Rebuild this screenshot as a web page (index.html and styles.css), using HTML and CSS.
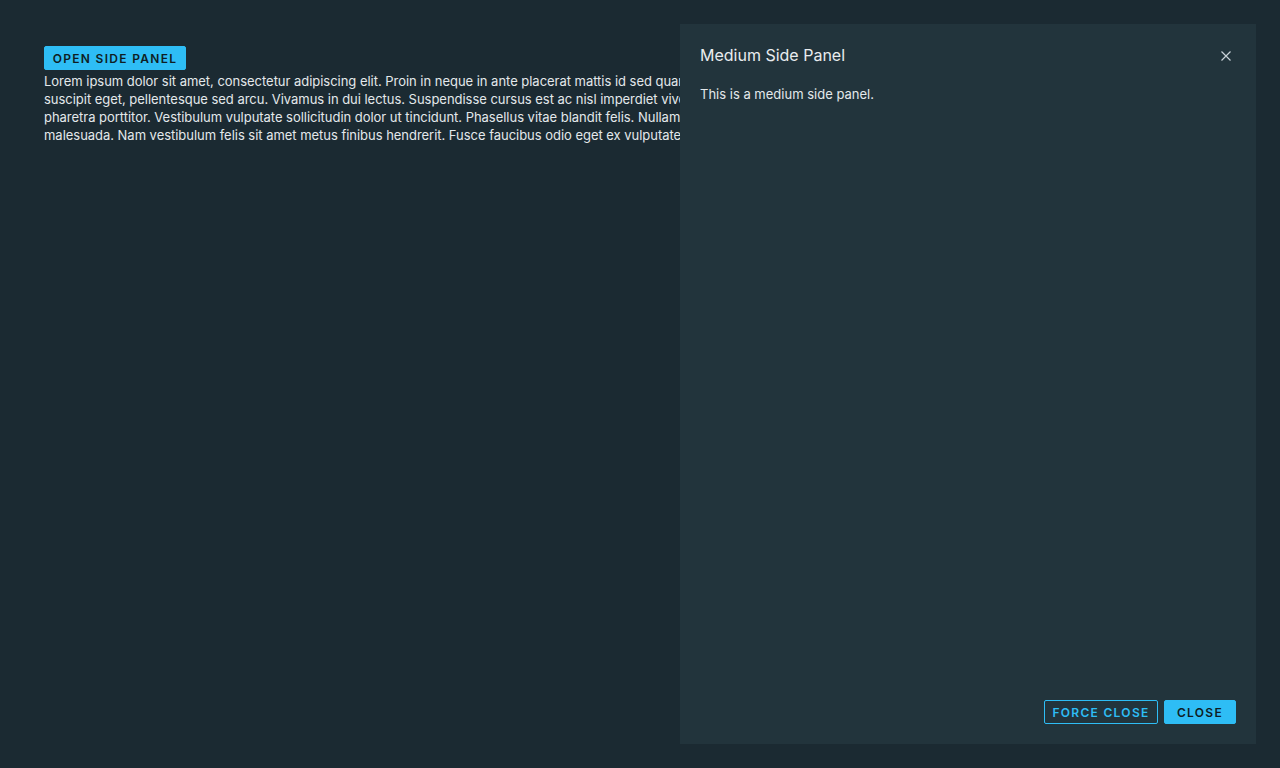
FILE: index.html
```html
<!DOCTYPE html>
<html>
<head>
<meta charset="utf-8">
<link rel="stylesheet" href="styles.css">
</head>
<body>
<main class="content">
  <button class="btn btn-primary btn-open">OPEN SIDE PANEL</button>
  <p class="lorem">Lorem ipsum dolor sit amet, consectetur adipiscing elit. Proin in neque in ante placerat mattis id sed quam. Proin rhoncus lacus et tristique pharetra. Nunc vitae ligula at metus<br>suscipit eget, pellentesque sed arcu. Vivamus in dui lectus. Suspendisse cursus est ac nisl imperdiet viverra. Aenean sagittis nibh lacus, in eleifend urna ultrices<br>pharetra porttitor. Vestibulum vulputate sollicitudin dolor ut tincidunt. Phasellus vitae blandit felis. Nullam posuere ipsum tincidunt velit pellentesque rhoncus. Morbi<br>malesuada. Nam vestibulum felis sit amet metus finibus hendrerit. Fusce faucibus odio eget ex vulputate rhoncus. Fusce nec aliquam leo, consequat tristique mauris.</p>
</main>
<aside class="side-panel">
  <header class="panel-header">
    <h3 class="panel-title">Medium Side Panel</h3>
    <button class="panel-close" aria-label="Close">
      <svg width="12" height="12" viewBox="0 0 12 12"><path d="M1.5 1.5 L10.5 10.5 M10.5 1.5 L1.5 10.5" stroke="#c9d2d8" stroke-width="1.2" fill="none"/></svg>
    </button>
  </header>
  <div class="panel-body">This is a medium side panel.</div>
  <footer class="panel-footer">
    <button class="btn btn-outline">FORCE CLOSE</button>
    <button class="btn btn-primary btn-close">CLOSE</button>
  </footer>
</aside>
</body>
</html>
```

FILE: styles.css
```css
html, body {
  margin: 0;
  height: 100%;
  background: #1b2a32;
  font-family: Inter, "Open Sans", sans-serif;
  color: #e9ecef;
  overflow: hidden;
}
.content {
  padding: 46px 44px 0 44px;
}
.btn {
  height: 24px;
  box-sizing: border-box;
  border-radius: 2px;
  font-family: Inter, "Open Sans", sans-serif;
  font-weight: 600;
  font-size: 12px;
  letter-spacing: 1.3px;
  padding: 0;
  cursor: pointer;
}
.btn-primary {
  background: #2ebdf5;
  border: 1px solid #2ebdf5;
  color: #0f1d24;
}
.btn-open {
  width: 142px;
}
.btn-outline {
  background: transparent;
  border: 1px solid #2ebdf5;
  color: #2ebdf5;
  width: 114px;
}
.btn-close {
  width: 72px;
}
.lorem {
  margin: 2px 0 0 0;
  width: 636px;
  overflow: hidden;
  font-size: 13px;
  line-height: 18px;
  color: #e3e8eb;
  white-space: nowrap;
  letter-spacing: -0.03px;
}
.side-panel {
  position: absolute;
  top: 24px;
  right: 24px;
  bottom: 24px;
  width: 576px;
  background: #22343c;
  display: flex;
  flex-direction: column;
  box-sizing: border-box;
  padding: 20px;
}
.panel-header {
  display: flex;
  align-items: center;
  justify-content: space-between;
  height: 22px;
}
.panel-title {
  margin: 0;
  font-weight: 400;
  font-size: 16px;
  color: #e9ecef;
}
.panel-close {
  background: none;
  border: 0;
  padding: 0;
  width: 12px;
  height: 12px;
  margin-right: 4px;
  margin-top: 2px;
  display: flex;
}
.panel-body {
  flex: 1;
  margin-top: 19px;
  font-size: 13px;
  line-height: 18px;
  color: #e3e8eb;
}
.panel-footer {
  display: flex;
  justify-content: flex-end;
  gap: 6px;
}
```
